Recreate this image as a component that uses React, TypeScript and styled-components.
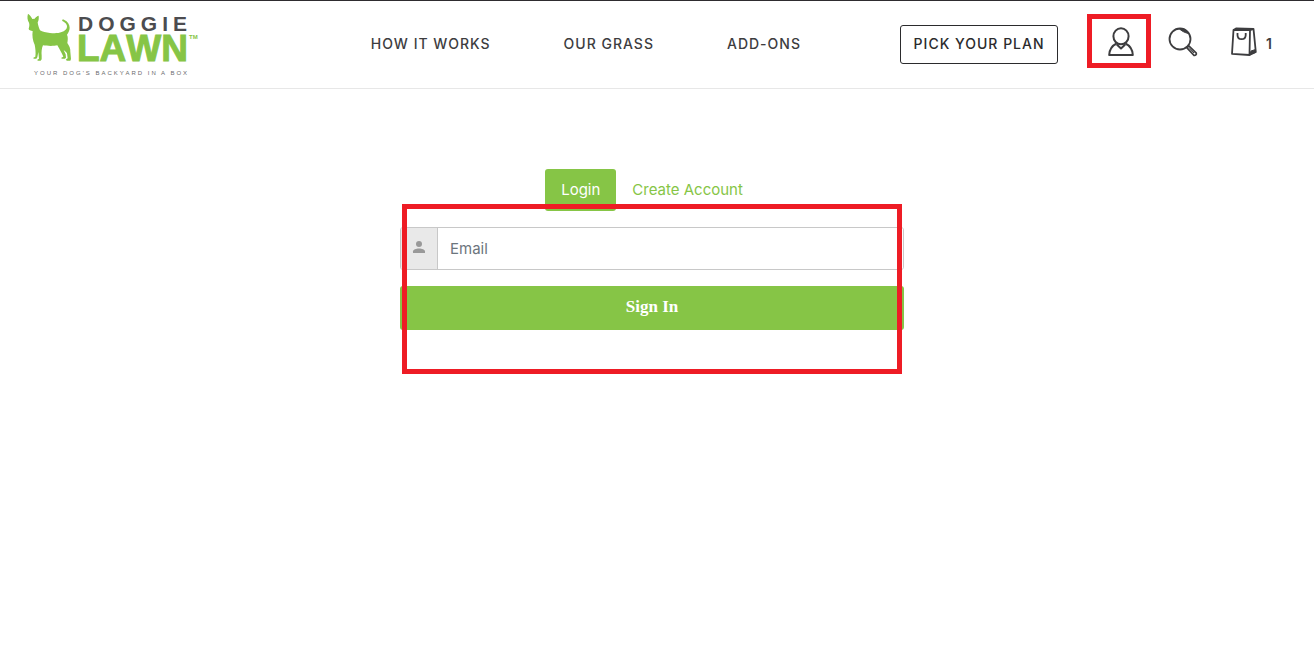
import React from "react";
import styled, { createGlobalStyle } from "styled-components";

const green = "#86c546";
const red = "#ee1c25";
const ink = "#3d3d3f";

const GlobalStyle = createGlobalStyle`
  *, *::before, *::after { box-sizing: border-box; }
  body {
    margin: 0;
    background: #fff;
    color: ${ink};
    font-family: Inter, "Liberation Sans", sans-serif;
  }
  button, input { font: inherit; color: inherit; }
`;

const Header = styled.header`
  display: flex;
  align-items: center;
  height: 89px;
  padding: 0 42px 0 26px;
  border-top: 1px solid #2e2c2f;
  border-bottom: 1px solid #e7e7e7;
`;

const Logo = styled.a`
  display: block;
  flex: none;
  width: 174px;
  height: 70px;
  svg { display: block; }
`;

const Nav = styled.nav`
  display: flex;
  gap: 73px;
  margin-left: 13vw;
  padding-bottom: 2px;
`;

const NavLink = styled.a`
  color: ${ink};
  font-size: 14px;
  font-weight: 500;
  line-height: 20px;
  letter-spacing: 1px;
  white-space: nowrap;
  text-decoration: none;
`;

const Actions = styled.div`
  display: flex;
  align-items: center;
  margin-left: auto;
`;

const PlanLink = styled.a`
  display: flex;
  align-items: center;
  justify-content: center;
  width: 158px;
  height: 39px;
  padding-bottom: 2px;
  border: 1px solid #2b2b2d;
  border-radius: 3px;
  color: #2b2b2d;
  font-size: 14px;
  font-weight: 500;
  letter-spacing: 1px;
  white-space: nowrap;
  text-decoration: none;
`;

const IconGroup = styled.div`
  display: flex;
  align-items: center;
  margin-left: 29px;
  padding-bottom: 8px;
`;

const IconButton = styled.button<{ $marked?: boolean }>`
  display: flex;
  align-items: center;
  justify-content: center;
  height: 54px;
  padding: ${(p) => (p.$marked ? "2px 12px 0 16px" : "2px 17px 0")};
  border: ${(p) => (p.$marked ? `5px solid ${red}` : "0")};
  background: none;
  svg { display: block; }
`;

const CartButton = styled(IconButton)`
  gap: 9px;
  padding: 2px 0 0 16px;
`;

const CartCount = styled.span`
  padding-top: 4px;
  font-size: 14px;
  font-weight: 600;
`;

const Main = styled.main`
  display: flex;
  justify-content: center;
  padding: 80px 10px 80px 0;
`;

const Account = styled.section`
  width: 100%;
  max-width: 504px;
`;

const Tabs = styled.div`
  display: flex;
  justify-content: center;
`;

const Tab = styled.button<{ $active?: boolean }>`
  height: 42px;
  padding: 0 16px 2px;
  border: 0;
  border-radius: 3px;
  background: ${(p) => (p.$active ? green : "transparent")};
  color: ${(p) => (p.$active ? "#fff" : green)};
  font-size: 15px;
`;

const Form = styled.form`
  position: relative;
  display: flex;
  flex-direction: column;
  gap: 16px;
  padding-top: 16px;
`;

const Field = styled.div`
  display: flex;
  height: 43px;
  border: 1px solid #c8c8c8;
  border-radius: 3px;
  overflow: hidden;
`;

const FieldIcon = styled.label`
  display: flex;
  align-items: center;
  justify-content: center;
  width: 37px;
  padding-bottom: 4px;
  border-right: 1px solid #c8c8c8;
  background: #e9e9e9;
`;

const TextInput = styled.input`
  flex: 1;
  min-width: 0;
  padding: 0 12px;
  border: 0;
  outline: 0;
  background: #fff;
  font-size: 15px;
  &::placeholder { color: #6c757d; opacity: 1; }
`;

const SubmitButton = styled.button`
  height: 44px;
  padding: 0 0 2px;
  border: 0;
  border-radius: 3px;
  background: ${green};
  color: #fff;
  font-family: "Liberation Serif", serif;
  font-size: 17px;
  font-weight: 700;
`;

const Marker = styled.div`
  position: absolute;
  inset: -7px 2px -44px;
  border: 5px solid ${red};
  pointer-events: none;
`;

const LogoArt = () => (
  <svg width="174" height="70" viewBox="26 10 174 70" aria-hidden="true">
    <path
      transform="translate(20 8) scale(.3333)"
      fill={green}
      d="M24 17C29 20 34 27 37 33L44 32C48 27 52 24 56 23C57 32 56 38 53 43C54 52 57 60 60 67C67 72 78 74 90 75C104 76 116 76 125 72C134 70 140 64 141 57C142 48 134 43 127 39C125 35 129 33 133 36C143 40 149 50 149 59C149 67 145 74 141 80C145 88 143 98 142 105C148 114 152 122 151 131L153 153L151 158L140 158L138 154L143 151L141 136C137 131 133 128 131 127L137 139L138 149L135 152L125 152L124 149L130 146C126 136 119 124 112 112C100 115 80 114 69 112C65 120 64 135 65 142L65 154L62 158L53 158L52 155L57 152L55 132L52 148L49 152L41 152L40 149L46 146C48 135 46 120 44 110C38 98 36 82 38 69C32 68 26 66 26 62C28 56 29 50 27 44C22 36 21 27 24 17Z"
    />
    <g fontFamily="'Liberation Sans', sans-serif">
      <text x="78" y="31" fontSize="21" fontWeight="700" letterSpacing="5" fill="#4c4c4f">DOGGIE</text>
      <text x="77" y="61" fontSize="37" fontWeight="700" fill={green} stroke={green} strokeWidth="1" style={{ fontKerning: "none" }}>LAWN</text>
      <text x="189" y="39" fontSize="6" fontWeight="700" fill={green}>TM</text>
      <text x="34" y="75" fontSize="6" letterSpacing="2" fill="#6a6a6d">YOUR DOG'S BACKYARD IN A BOX</text>
    </g>
  </svg>
);

const UserIcon = () => (
  <svg width="26" height="30" viewBox="0 0 26 30" fill="none" stroke={ink} strokeWidth="2" strokeLinejoin="round" aria-hidden="true">
    <ellipse cx="13" cy="9.3" rx="7.6" ry="8" />
    <path d="M8.6 16.5C4.5 18.5 1.5 21 1.2 28H24.8C24.5 21 21.5 18.5 17.4 16.5" />
    <path d="M8.8 17.5L13 21.5L17.2 17.5" />
  </svg>
);

const SearchIcon = () => (
  <svg width="30" height="30" viewBox="0 0 30 30" fill="none" stroke={ink} aria-hidden="true">
    <circle cx="12" cy="12" r="10.5" strokeWidth="1.8" />
    <path d="M11 1.5C15 1.2 19 3 20.5 6.500C17 5.8 13.5 4 11 1.500Z" fill={ink} strokeWidth="1" />
    <path d="M18.8 20.7L20.8 18.8L28.3 26.2C28.7 27.5 27.4 28.8 26 28.4Z" strokeWidth="1.7" strokeLinejoin="round" />
    <path d="M21.5 21.2L26 26" strokeWidth="1" />
  </svg>
);

const BagIcon = () => (
  <svg width="26" height="30" viewBox="0 0 26 30" fill="none" stroke={ink} strokeWidth="1.8" strokeLinejoin="round" aria-hidden="true">
    <path d="M2.500 3L19 3.2L18.500 28L1 26.8Z" />
    <path d="M2.500 3L5 1.5L22.500 1.8L24.800 25L18.500 28M19 3.2L22.500 1.8M4 2.200L21 2.400" />
    <path d="M6.500 6V8.200C6.700 13.500 14.500 13.500 14.700 8.200V6" />
    <path d="M19 27.500L20 24L24.500 22.500L24.300 25.500Z" fill={ink} strokeWidth="1" />
  </svg>
);

const PersonIcon = () => (
  <svg width="14" height="14" viewBox="0 0 14 14" fill="#999" aria-hidden="true">
    <circle cx="7" cy="4" r="3" />
    <path d="M1 13V11.5C1 9.5 4 8.5 7 8.5S13 9.5 13 11.5V13Z" />
  </svg>
);

export default function App() {
  return (
    <>
      <GlobalStyle />
      <Header>
        <Logo href="#" aria-label="Doggie Lawn">
          <LogoArt />
        </Logo>
        <Nav>
          <NavLink href="#how">HOW IT WORKS</NavLink>
          <NavLink href="#grass">OUR GRASS</NavLink>
          <NavLink href="#addons">ADD-ONS</NavLink>
        </Nav>
        <Actions>
          <PlanLink href="#plans">PICK YOUR PLAN</PlanLink>
          <IconGroup>
            <IconButton $marked type="button" aria-label="Account">
              <UserIcon />
            </IconButton>
            <IconButton type="button" aria-label="Search">
              <SearchIcon />
            </IconButton>
            <CartButton type="button" aria-label="Cart, 1 item">
              <BagIcon />
              <CartCount>1</CartCount>
            </CartButton>
          </IconGroup>
        </Actions>
      </Header>
      <Main>
        <Account>
          <Tabs role="tablist">
            <Tab $active type="button" role="tab" aria-selected="true">Login</Tab>
            <Tab type="button" role="tab" aria-selected="false">Create Account</Tab>
          </Tabs>
          <Form onSubmit={(e) => e.preventDefault()}>
            <Field>
              <FieldIcon htmlFor="email" aria-label="Email">
                <PersonIcon />
              </FieldIcon>
              <TextInput id="email" type="email" placeholder="Email" />
            </Field>
            <SubmitButton type="submit">Sign In</SubmitButton>
            <Marker />
          </Form>
        </Account>
      </Main>
    </>
  );
}
